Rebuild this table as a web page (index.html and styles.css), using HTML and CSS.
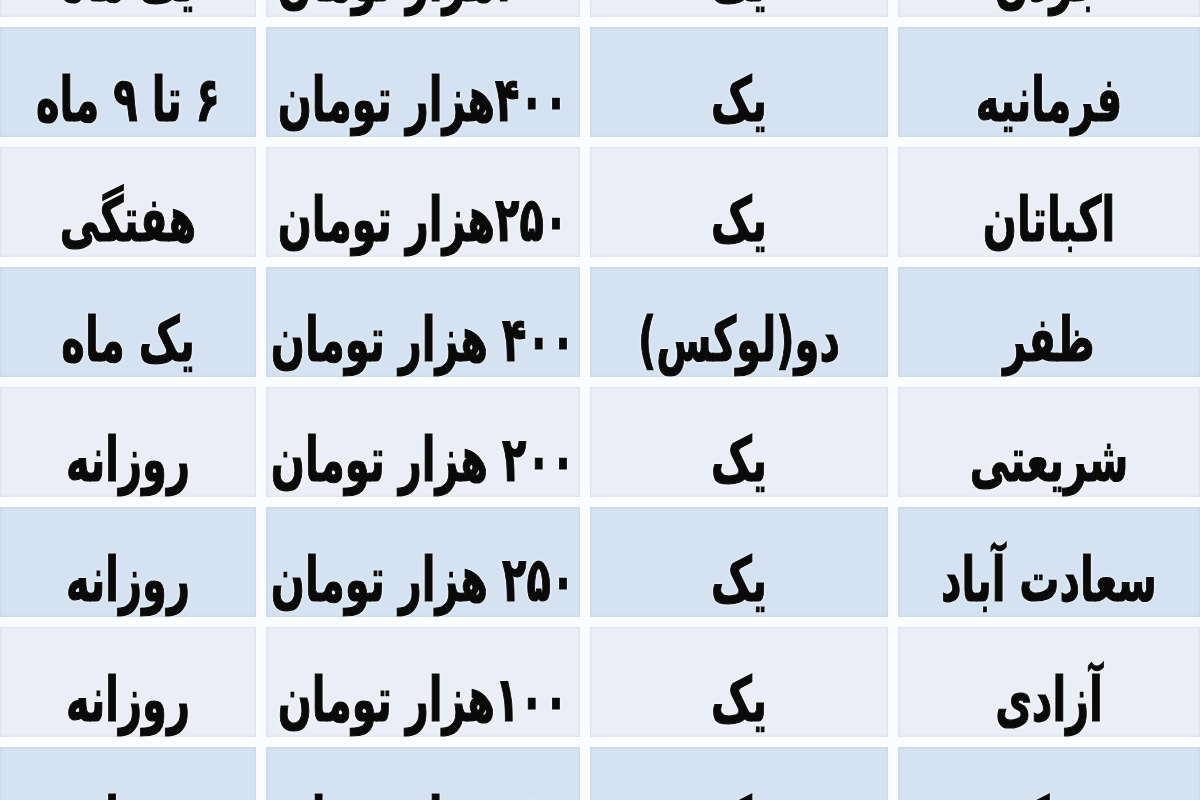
FILE: index.html
```html
<!DOCTYPE html>
<html lang="fa" dir="rtl">
<head>
<meta charset="utf-8">
<title>جدول اجاره</title>
<link rel="stylesheet" href="styles.css">
</head>
<body>
<div class="sheet">
  <div class="table">
    <div class="cell light"><span class="txt">جردن</span></div>
    <div class="cell light"><span class="txt">یک</span></div>
    <div class="cell light"><span class="txt">۳۰۰هزار تومان</span></div>
    <div class="cell light"><span class="txt">یک ماه</span></div>

    <div class="cell blue"><span class="txt">فرمانیه</span></div>
    <div class="cell blue"><span class="txt">یک</span></div>
    <div class="cell blue"><span class="txt">۴۰۰هزار تومان</span></div>
    <div class="cell blue"><span class="txt">۶ تا ۹ ماه</span></div>

    <div class="cell light"><span class="txt">اکباتان</span></div>
    <div class="cell light"><span class="txt">یک</span></div>
    <div class="cell light"><span class="txt">۲۵۰هزار تومان</span></div>
    <div class="cell light"><span class="txt">هفتگی</span></div>

    <div class="cell blue"><span class="txt">ظفر</span></div>
    <div class="cell blue"><span class="txt">دو(لوکس)</span></div>
    <div class="cell blue"><span class="txt">۴۰۰ هزار تومان</span></div>
    <div class="cell blue"><span class="txt">یک ماه</span></div>

    <div class="cell light"><span class="txt">شریعتی</span></div>
    <div class="cell light"><span class="txt">یک</span></div>
    <div class="cell light"><span class="txt">۲۰۰ هزار تومان</span></div>
    <div class="cell light"><span class="txt">روزانه</span></div>

    <div class="cell blue"><span class="txt">سعادت آباد</span></div>
    <div class="cell blue"><span class="txt">یک</span></div>
    <div class="cell blue"><span class="txt">۲۵۰ هزار تومان</span></div>
    <div class="cell blue"><span class="txt">روزانه</span></div>

    <div class="cell light"><span class="txt">آزادی</span></div>
    <div class="cell light"><span class="txt">یک</span></div>
    <div class="cell light"><span class="txt">۱۰۰هزار تومان</span></div>
    <div class="cell light"><span class="txt">روزانه</span></div>

    <div class="cell blue"><span class="txt">ونک</span></div>
    <div class="cell blue"><span class="txt">یک</span></div>
    <div class="cell blue"><span class="txt">۱۵۰هزار تومان</span></div>
    <div class="cell blue"><span class="txt">روزانه</span></div>
  </div>
</div>
</body>
</html>
```

FILE: styles.css
```css
html, body {
  margin: 0;
  padding: 0;
  background: #ffffff;
}

body {
  width: 1200px;
  height: 800px;
  overflow: hidden;
  font-family: "DejaVu Sans", "Noto Sans", sans-serif;
}

.sheet {
  width: 1200px;
  height: 800px;
  overflow: hidden;
  background: #fbfcfe;
}

.table {
  direction: rtl;
  display: grid;
  grid-template-columns: 302px 298px 314px 256px;
  grid-auto-rows: 110px;
  column-gap: 10px;
  row-gap: 10px;
  margin-top: -93px;
}

.cell {
  display: flex;
  align-items: center;
  justify-content: center;
  padding-top: 33px;
  box-sizing: border-box;
  font-size: 40px;
  font-weight: bold;
  color: #0a0a0a;
  white-space: nowrap;
  box-shadow: inset 0 0 3px rgba(150, 165, 190, 0.35);
}

.txt {
  display: inline-block;
  line-height: 1;
  transform: scaleY(1.55);
  letter-spacing: -0.5px;
  -webkit-text-stroke: 0.8px #0a0a0a;
  text-shadow: 0 0 3px #ffffff, 0 0 2px #ffffff, 0 0 1px #ffffff;
}

.blue {
  background: #d4e2f2;
}

.light {
  background: #eceef7;
}
```
